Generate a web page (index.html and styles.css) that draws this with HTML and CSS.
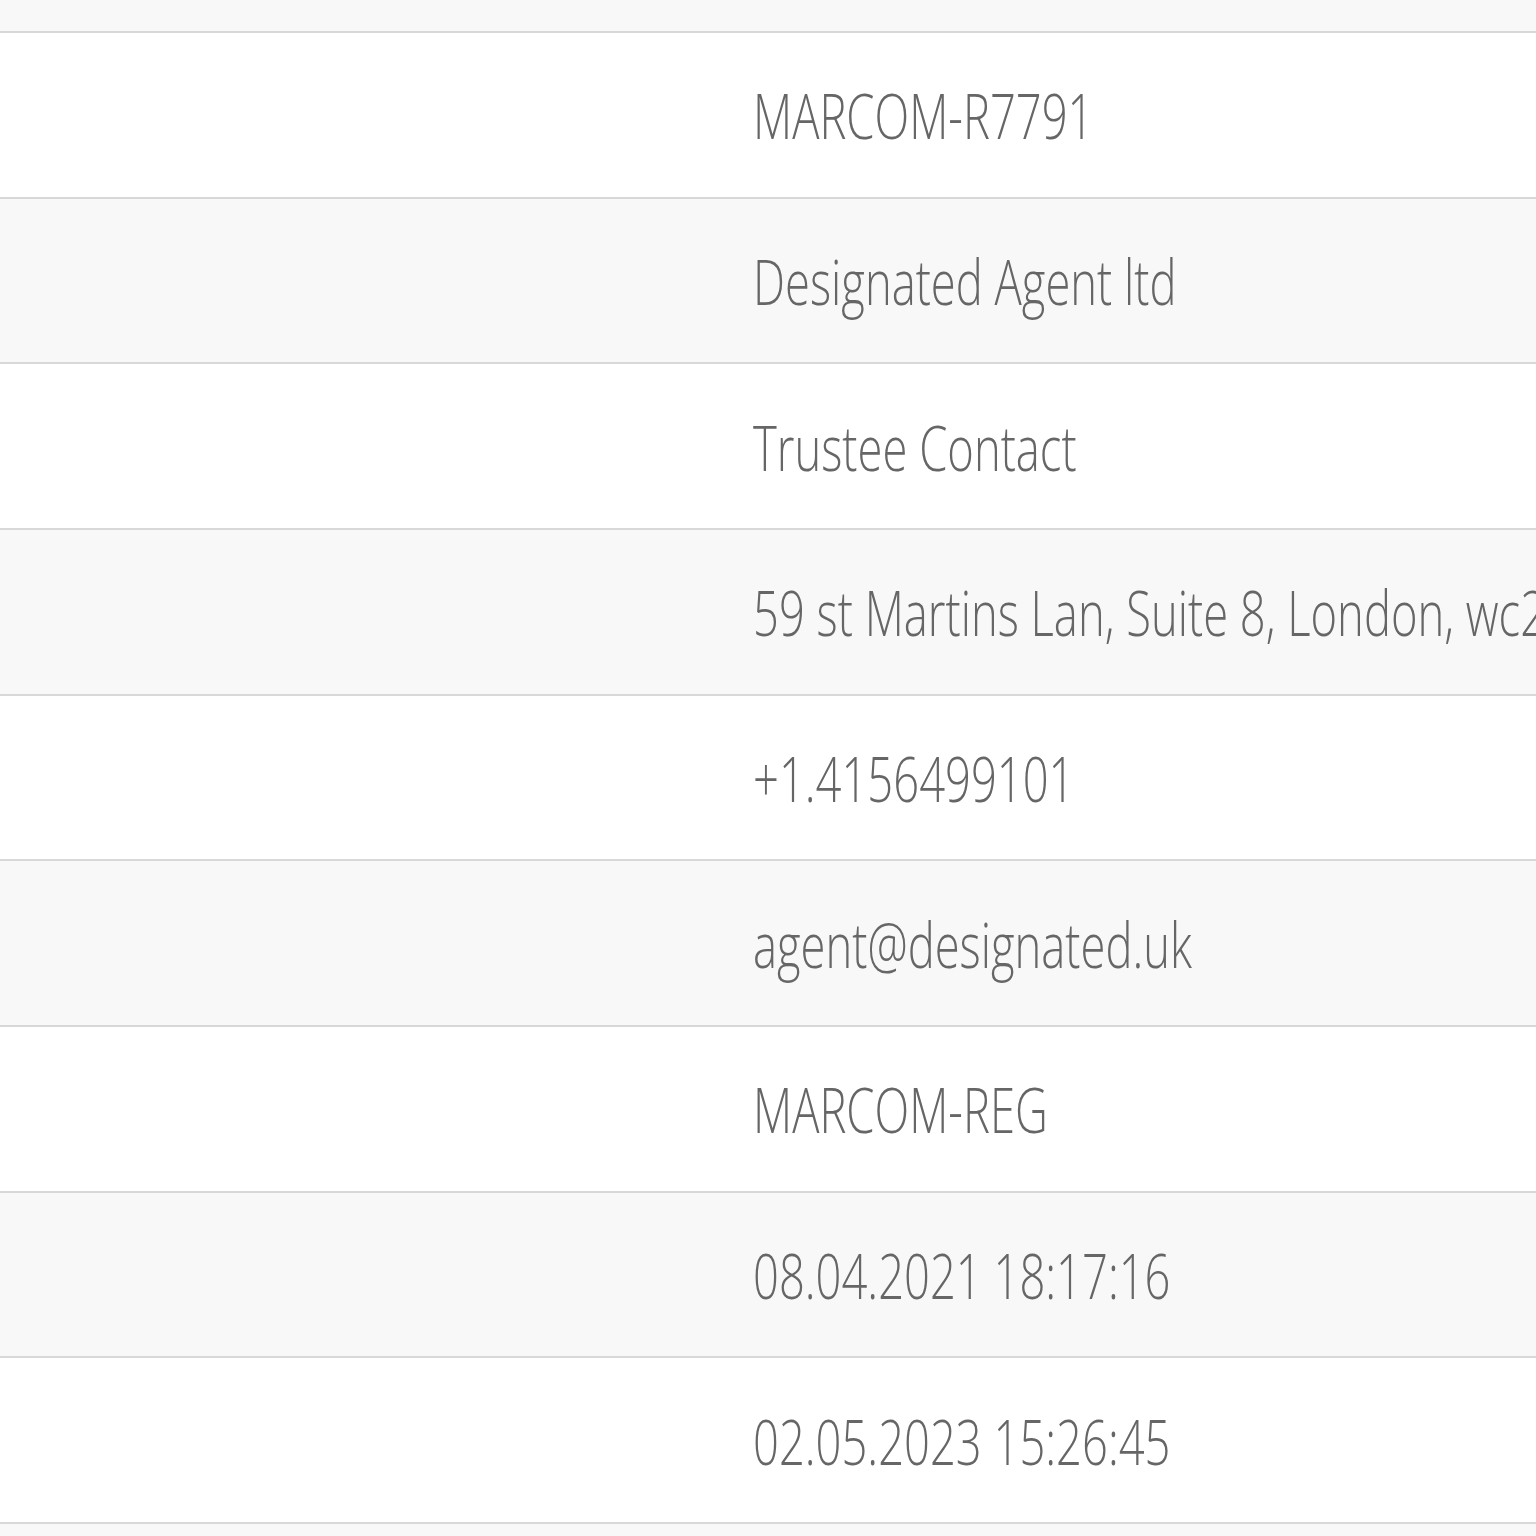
FILE: index.html
```html
<!DOCTYPE html>
<html>
<head>
<meta charset="utf-8">
<link rel="stylesheet" href="styles.css">
</head>
<body>
<div class="table">
  <div class="top"></div>
  <div class="row"><div class="label"></div><div class="value"><span>MARCOM-R7791</span></div></div>
  <div class="row"><div class="label"></div><div class="value"><span>Designated Agent ltd</span></div></div>
  <div class="row"><div class="label"></div><div class="value"><span>Trustee Contact</span></div></div>
  <div class="row"><div class="label"></div><div class="value"><span>59 st Martins Lan, Suite 8, London, wc2n 4jS</span></div></div>
  <div class="row"><div class="label"></div><div class="value"><span>+1.4156499101</span></div></div>
  <div class="row"><div class="label"></div><div class="value"><span>agent@designated.uk</span></div></div>
  <div class="row"><div class="label"></div><div class="value"><span>MARCOM-REG</span></div></div>
  <div class="row"><div class="label"></div><div class="value"><span>08.04.2021 18:17:16</span></div></div>
  <div class="row"><div class="label"></div><div class="value"><span>02.05.2023 15:26:45</span></div></div>
  <div class="bottom"></div>
</div>
</body>
</html>
```

FILE: styles.css
```css
html, body {
  margin: 0;
  padding: 0;
  background: #f8f8f8;
}
.table {
  width: 1536px;
  height: 1536px;
  overflow: hidden;
  display: flex;
  flex-direction: column;
  font-family: "Open Sans", "Liberation Sans", sans-serif;
  color: #666666;
}
.top {
  height: 31px;
  flex: none;
  background: #f8f8f8;
  border-bottom: 2px solid #d8d8d8;
}
.row {
  flex: none;
  height: 165.67px;
  box-sizing: border-box;
  border-bottom: 2px solid #d8d8d8;
  display: grid;
  grid-template-columns: 753px 1fr;
  align-items: center;
  background: #ffffff;
  overflow: hidden;
}
.row:nth-child(odd) {
  background: #f8f8f8;
}
.value {
  white-space: nowrap;
  font-size: 63px;
  font-weight: 300;
  line-height: 1;
}
.value span {
  display: inline-block;
  transform: scaleX(0.72);
  transform-origin: left center;
}
.bottom {
  flex: 1;
  background: #f8f8f8;
}
```
